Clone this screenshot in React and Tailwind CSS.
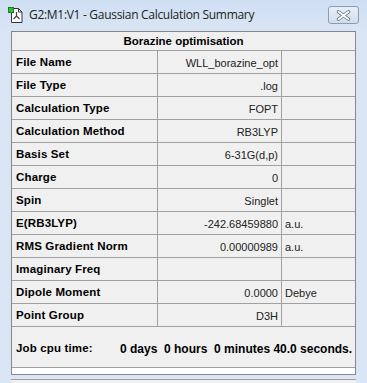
import React from 'react';

const rows = [
  ['File Name', 'WLL_borazine_opt', ''],
  ['File Type', '.log', ''],
  ['Calculation Type', 'FOPT', ''],
  ['Calculation Method', 'RB3LYP', ''],
  ['Basis Set', '6-31G(d,p)', ''],
  ['Charge', '0', ''],
  ['Spin', 'Singlet', ''],
  ['E(RB3LYP)', '-242.68459880', 'a.u.'],
  ['RMS Gradient Norm', '0.00000989', 'a.u.'],
  ['Imaginary Freq', '', ''],
  ['Dipole Moment', '0.0000', 'Debye'],
  ['Point Group', 'D3H', ''],
];

const AppIcon = () => (
  <svg width="17" height="17" viewBox="0 0 17 17">
    <path d="M3.5 1.5h7l3.5 3.5v10.5h-10.5z" fill="#fff" stroke="#333" strokeWidth="1" />
    <path d="M10.5 1.5v3.5h3.5" fill="none" stroke="#333" strokeWidth="1" />
    <path d="M8.5 5v4M8.5 9l-3 3M8.5 9l3 3" fill="none" stroke="#444" strokeWidth="1.2" />
    <rect x="0.5" y="0.5" width="5" height="5" fill="#2fbf3a" stroke="#1a7d22" strokeWidth="1" />
  </svg>
);

const CloseButton = () => (
  <div className="w-[31px] h-[18px] rounded-[3px] border border-[#8a9bb3] bg-gradient-to-b from-[#e9eff8] to-[#d2ddec] flex items-center justify-center">
    <svg width="15" height="11" viewBox="0 0 15 11">
      <path d="M2.5 1.8l10 7.4M12.5 1.8l-10 7.4" stroke="#6b7a8d" strokeWidth="3.4" strokeLinecap="round" />
      <path d="M2.5 1.8l10 7.4M12.5 1.8l-10 7.4" stroke="#fff" strokeWidth="1.7" strokeLinecap="round" />
    </svg>
  </div>
);

export default function App() {
  return (
    <div className="w-[367px] h-[383px] overflow-hidden bg-[#dae6f4] flex flex-col font-['Liberation_Sans',Arial,sans-serif]">
      <div className="h-[31px] shrink-0 flex items-start pl-[8px] pr-[8px] pt-[6px] bg-gradient-to-b from-[#cfdff2] to-[#d9e5f4]">
        <div className="mt-[1px]">
          <AppIcon />
        </div>
        <span className="ml-[4px] mt-[1px] text-[12px] leading-[16px] text-[#222] font-['Open_Sans','Noto_Sans',sans-serif] tracking-[-0.3px]">
          G2:M1:V1 - Gaussian Calculation Summary
        </span>
        <div className="ml-auto">
          <CloseButton />
        </div>
      </div>

      <div className="mx-[11px] w-[345px] border border-[#828790] bg-white">
        <div className="h-[19px] pt-[2px] bg-[#f0f0f0] border-b border-[#a0a0a0] flex items-center justify-center text-[11.5px] font-bold text-black">
          Borazine optimisation
        </div>
        {rows.map(([label, value, unit]) => (
          <div key={label} className="h-[23px] flex bg-[#f0f0f0] border-b border-[#a0a0a0] text-[11px] text-black">
            <div className="w-[146px] border-r border-[#a0a0a0] pl-[4px] pt-[2px] flex items-center font-bold text-[11.5px] tracking-[0.15px]">{label}</div>
            <div className="w-[124px] border-r border-[#a0a0a0] pr-[3px] pt-[2px] flex items-center justify-end text-[#222]">{value}</div>
            <div className="flex-1 pl-[3px] pt-[2px] flex items-center text-[#222]">{unit}</div>
          </div>
        ))}
        <div className="h-[41px] pt-[3px] bg-[#f0f0f0] border-b border-[#a0a0a0] flex items-center pl-[4px] text-[12px] font-bold text-black whitespace-pre">
          <span className="w-[104px] text-[11.5px] tracking-[0.15px]">Job cpu time:</span>
          <span>0 days  0 hours  0 minutes 40.0 seconds.</span>
        </div>
        <div className="h-[6px]" />
      </div>

      <div className="mx-[11px] mt-[4px] w-[345px] h-[10px] border-t border-[#a0a0a0] bg-[#f0f0f0]" />
    </div>
  );
}
